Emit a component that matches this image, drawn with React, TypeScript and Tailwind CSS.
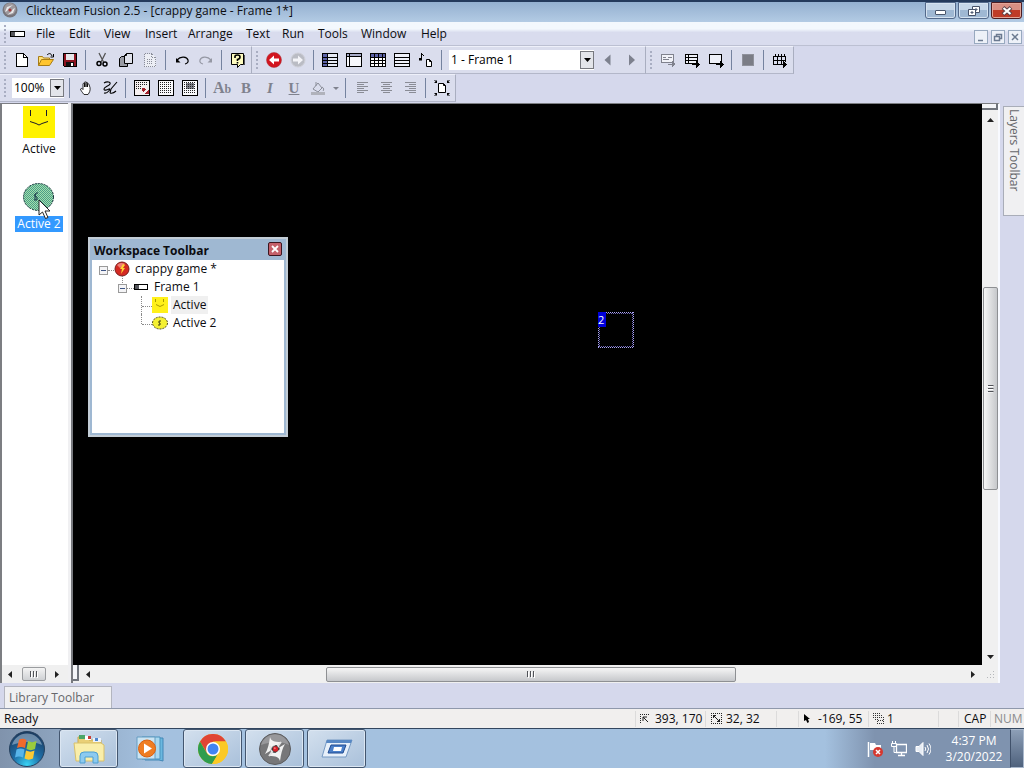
import type { ReactNode } from "react";

const MENUS = [
  { label: "File", width: "w-[33px]" },
  { label: "Edit", width: "w-[35px]" },
  { label: "View", width: "w-[41px]" },
  { label: "Insert", width: "w-[43px]" },
  { label: "Arrange", width: "w-[58px]" },
  { label: "Text", width: "w-[36px]" },
  { label: "Run", width: "w-[36px]" },
  { label: "Tools", width: "w-[43px]" },
  { label: "Window", width: "w-[60px]" },
  { label: "Help", width: "w-[39px]" },
];

/** 16x16 pixel-style icon canvas. */
function Glyph({ children, smooth }: { children: ReactNode; smooth?: boolean }) {
  return (
    <svg
      className="h-4 w-4 shrink-0"
      viewBox="0 0 16 16"
      fill="none"
      stroke="#000"
      shapeRendering={smooth ? "auto" : "crispEdges"}
      aria-hidden="true"
    >
      {children}
    </svg>
  );
}

function ToolButton({ label, children }: { label: string; children: ReactNode }) {
  return (
    <button type="button" aria-label={label} className="flex h-6 w-6 shrink-0 items-center justify-center">
      {children}
    </button>
  );
}

function Sep() {
  return <div className="ml-[3px] mr-1 h-5 w-px shrink-0 bg-[#75839f]" />;
}

function Grip() {
  return (
    <div className="flex w-[10px] shrink-0 flex-col items-center gap-[2px]">
      {[0, 1, 2, 3, 4].map((i) => (
        <div key={i} className="h-[2px] w-[2px] bg-[#a9aec2]" />
      ))}
    </div>
  );
}

function ToolGroup({ children }: { children: ReactNode }) {
  return (
    <div className="flex h-[28px] items-center border-r border-b border-r-[#a9aec0] border-b-[#b3b7c9] border-t border-t-[#eef0fa] bg-[#dadded] pr-px">
      {children}
    </div>
  );
}

function DropArrow() {
  return (
    <span className="pointer-events-none absolute top-px right-0 bottom-px flex w-[14px] items-center justify-center border border-[#77797f] bg-[#e3e5ea]">
      <svg className="h-1 w-[7px]" viewBox="0 0 7 4" aria-hidden="true">
        <path d="M0 0h7L3.500 4z" fill="#000" />
      </svg>
    </span>
  );
}

function AlignIcon({ lines }: { lines: string }) {
  return (
    <Glyph>
      <path d={lines} stroke="#8a8c95" />
    </Glyph>
  );
}

function TitleBar() {
  return (
    <header className="flex h-[22px] shrink-0 items-start border-t-2 border-[#243a5c] bg-linear-to-b from-[#94b0d0] to-[#b3cbe4] pl-[2px]">
      <svg className="h-4 w-4" viewBox="0 0 16 16" aria-hidden="true">
        <circle cx="8" cy="8" r="7.500" fill="#77757b" />
        <circle cx="8" cy="7" r="6" fill="#9d999d" />
        <path d="M11 3L5 5l-2 5 2-1 2-3zM5 13l6-2 2-5-2 1-2 3z" fill="#e8e8ea" />
        <circle cx="8" cy="8" r="1.500" fill="#a83a3a" />
      </svg>
      <h1 className="ml-2 flex-1 text-[12px] leading-[18px] whitespace-nowrap">
        Clickteam Fusion 2.5 - [crappy game - Frame 1*]
      </h1>
      <div className="flex gap-[2px] pr-[2px]">
        <button
          type="button"
          aria-label="Minimize"
          className="flex h-[17px] w-[31px] items-center justify-center rounded-b-[3px] border border-[#53698a] bg-linear-to-b from-[#c5d6e8] from-50% to-[#9fb8d3] to-50% shadow-[inset_0_0_0_1px_#d5e2f0]"
        >
          <span className="mt-[3px] h-[5px] w-[11px] rounded-[1px] border border-[#4a566b] bg-white" />
        </button>
        <button
          type="button"
          aria-label="Restore"
          className="flex h-[17px] w-[31px] items-center justify-center rounded-b-[3px] border border-[#53698a] bg-linear-to-b from-[#c5d6e8] from-50% to-[#9fb8d3] to-50% shadow-[inset_0_0_0_1px_#d5e2f0]"
        >
          <svg className="h-3 w-3" viewBox="0 0 12 12" fill="#fff" stroke="#47536a" aria-hidden="true">
            <path d="M4.500 1.500h7v6h-7zM7 4h2v1H7z" />
            <path d="M.5 4.500h7v6h-7z" />
            <path d="M3 7h2v1H3z" fill="#a9bfd8" />
          </svg>
        </button>
        <button
          type="button"
          aria-label="Close"
          className="flex h-[17px] w-[31px] items-center justify-center rounded-b-[3px] border border-[#4d1d22] bg-linear-to-b from-[#d98f83] from-50% to-[#bf3b28] to-50% shadow-[inset_0_0_0_1px_#e2a598]"
        >
          <svg className="h-[10px] w-3" viewBox="0 0 12 10" aria-hidden="true">
            <path d="M2 1.500l8 7M10 1.500l-8 7" stroke="#5c4147" strokeWidth="4" />
            <path d="M2.500 2l7 6M9.500 2l-7 6" stroke="#fff" strokeWidth="2.200" />
          </svg>
        </button>
      </div>
    </header>
  );
}

function MenuBar() {
  return (
    <nav className="flex h-[24px] shrink-0 items-center border-b border-[#bcc0d2] bg-linear-to-b from-[#f3f8fd] from-30% to-[#d9dcee] to-45%">
      <Grip />
      <svg className="mr-[9px] h-[6px] w-[15px]" viewBox="0 0 15 6" shapeRendering="crispEdges" aria-hidden="true">
        <path d="M.5.5h14v5H.5z" fill="#fff" stroke="#000" />
        <path d="M1 1h4v4H1z" fill="#55565c" />
      </svg>
      {MENUS.map((m) => (
        <button key={m.label} type="button" className={`${m.width} shrink-0 pl-[2px] text-left text-[12px] leading-4`}>
          {m.label}
        </button>
      ))}
      <div className="mt-[7px] ml-auto flex gap-[3px] pr-[2px]">
        {[
          ["Minimize document", "M3 9.500h5", "M0 0"],
          ["Restore document", "M4.500 5V3.500h5v4H8", "M2.500 5.500h5v4h-5z"],
          ["Close document", "M3 3l6 6M9 3l-6 6", "M0 0"],
        ].map(([label, a, b]) => (
          <button key={label} type="button" aria-label={label} className="h-[14px] w-[14px] border border-[#98a9bf] bg-[#edf1f8]">
            <svg className="h-3 w-3" viewBox="0 0 12 12" fill="none" stroke="#6b7a90" strokeWidth="1.500" aria-hidden="true">
              <path d={a} />
              <path d={b} />
            </svg>
          </button>
        ))}
      </div>
    </nav>
  );
}

function MainToolbar() {
  return (
    <div className="flex h-[28px] shrink-0">
      <ToolGroup>
        <Grip />
        <ToolButton label="New">
          <Glyph>
            <path d="M2.500 1.500h7l4 4v9h-11z" fill="#fff" />
            <path d="M9.500 1.500v4h4" />
          </Glyph>
        </ToolButton>
        <ToolButton label="Open">
          <Glyph smooth>
            <path d="M.5 13.500v-9h4l1 1.500h6v2" fill="#ffe27a" stroke="#a87c14" />
            <path d="M.5 13.500l3-6h12l-4 6z" fill="#ffc52e" stroke="#a87c14" />
            <path d="M9 3c2-2 4-2 5 1M15.500 2v3h-3" />
          </Glyph>
        </ToolButton>
        <ToolButton label="Save">
          <Glyph>
            <path d="M1.500 1.500h13v13h-12l-1-1z" fill="#8e1420" />
            <path d="M4 2h8v6H4z" fill="#e6e6e9" stroke="none" />
            <path d="M4 10h8v4H4z" fill="#111" stroke="none" />
            <path d="M9 11h2v3H9z" fill="#fff" stroke="none" />
          </Glyph>
        </ToolButton>
        <Sep />
        <ToolButton label="Cut">
          <Glyph smooth>
            <path d="M5 1l4.500 9M11.500 1L7 10" stroke="#555" strokeWidth="1.300" />
            <circle cx="5" cy="11.500" r="2" strokeWidth="1.500" />
            <circle cx="11" cy="12" r="2" strokeWidth="1.500" />
          </Glyph>
        </ToolButton>
        <ToolButton label="Copy">
          <Glyph smooth>
            <path d="M3.500 4.500h6v10h-8v-8z" fill="#999ba3" />
            <path d="M8.500 1.500h6v10h-8v-8z" fill="#dfe1ea" />
            <path d="M8.500 1.500v2h-2" />
          </Glyph>
        </ToolButton>
        <ToolButton label="Paste">
          <Glyph>
            <path d="M2.500 1.500h7l4 4v9h-11z" fill="#eceef5" stroke="#8a8d99" strokeDasharray="1 1" />
            <path d="M9.500 1.500v4h4M5 7.500h6M5 9.500h6M5 11.500h6" stroke="#8a8d99" strokeDasharray="1 1" />
          </Glyph>
        </ToolButton>
        <Sep />
        <ToolButton label="Undo">
          <Glyph smooth>
            <path d="M3 8c4-4.500 10-3 11 0 .5 2-1 3.500-3 4" strokeWidth="1.200" />
            <path d="M2 6v4.500h4.500z" fill="#000" stroke="none" />
          </Glyph>
        </ToolButton>
        <ToolButton label="Redo">
          <Glyph smooth>
            <path d="M13 8C9 3.500 3 5 2 8c-.5 2 1 3.500 3 4" stroke="#9598a4" strokeWidth="1.200" />
            <path d="M14 6v4.500H9.500z" fill="#9598a4" stroke="none" />
          </Glyph>
        </ToolButton>
        <Sep />
        <ToolButton label="Help">
          <Glyph smooth>
            <path d="M1.500 1.500h12v11h-3l-3 3v-3h-6z" fill="#fdfbbf" />
            <path d="M5 6V4.500q0-1.500 2.500-1.500T10 5t-2.500 2.500V9M7.500 10v1.500" strokeWidth="1.600" />
            <path d="M14.500 3v10" stroke="#55565c" />
          </Glyph>
        </ToolButton>
      </ToolGroup>
      <ToolGroup>
        <Grip />
        <ToolButton label="Back">
          <Glyph smooth>
            <circle cx="8" cy="8" r="7.500" fill="#d2151f" stroke="#a8323a" strokeWidth=".5" />
            <path d="M3 8l5-4.500v3h5v3H8v3z" fill="#fff" stroke="none" />
          </Glyph>
        </ToolButton>
        <ToolButton label="Forward">
          <Glyph smooth>
            <circle cx="8" cy="8" r="7" fill="#babcc4" stroke="#cfd0d8" />
            <path d="M13 8L8 3.500v3H3v3h5v3z" fill="#f4f4f8" stroke="none" />
          </Glyph>
        </ToolButton>
        <Sep />
        <ToolButton label="Storyboard editor">
          <Glyph>
            <path d="M.5 1.500h15v13H.5z" fill="#e6eaf4" />
            <path d="M1 2h4v12H1z" fill="#5d63a8" stroke="none" />
            <path d="M5.500 2v12M1 5.500h14M1 8.500h14M1 11.500h14" />
          </Glyph>
        </ToolButton>
        <ToolButton label="Frame editor">
          <Glyph>
            <path d="M.5 1.500h15v13H.5z" fill="#f7f8fc" />
            <path d="M1 2h14v2H1z" fill="#a9adc9" stroke="none" />
            <path d="M3.500 2v12M1 4.500h14" />
          </Glyph>
        </ToolButton>
        <ToolButton label="Event editor">
          <Glyph>
            <path d="M.5 1.500h15v13H.5z" fill="#fff" />
            <path d="M1 2h14v3H1z" fill="#5d63a8" stroke="none" />
            <path d="M1 5.500h14M1 8.500h14M1 11.500h14M4.500 2v12M8.500 2v12M12.500 2v12" />
          </Glyph>
        </ToolButton>
        <ToolButton label="Event list editor">
          <Glyph>
            <path d="M.5 1.500h15v13H.5z" fill="#eef0f8" />
            <path d="M1 5.500h14M1 8.500h14M1 11.500h14" />
          </Glyph>
        </ToolButton>
        <ToolButton label="Data elements">
          <Glyph smooth>
            <path d="M3.500 1v6M4 2l2 2" />
            <path d="M1 6h3v2.500H1z" fill="#000" stroke="none" />
            <path d="M8.500 7.500h3l2 2v5h-5zM11.500 7.500v2h2" fill="#fff" />
          </Glyph>
        </ToolButton>
        <Sep />
        <label className="relative mr-[2px] ml-[3px] block h-5 w-[145px]">
          <select
            aria-label="Frame"
            className="block h-5 w-full appearance-none bg-white pl-[2px] text-[12px] leading-5 text-black outline-none"
          >
            <option>1 - Frame 1</option>
          </select>
          <DropArrow />
        </label>
        <ToolButton label="Previous frame">
          <Glyph smooth>
            <path d="M10.500 2.500v11L4.500 8z" fill="#7d818e" stroke="none" />
          </Glyph>
        </ToolButton>
        <ToolButton label="Next frame">
          <Glyph smooth>
            <path d="M5 2.500v11L11 8z" fill="#7d818e" stroke="none" />
          </Glyph>
        </ToolButton>
      </ToolGroup>
      <ToolGroup>
        <Grip />
        <ToolButton label="Run project">
          <Glyph>
            <path d="M1.500 2.500h12v8h-12z" fill="#f1f2f8" stroke="#80828d" />
            <path d="M3 5.500h3M3 7.500h6M8 5.500h4M8 12.500h6" stroke="#80828d" />
            <path d="M12 9v6l4-3z" fill="#80828d" stroke="none" />
          </Glyph>
        </ToolButton>
        <ToolButton label="Run application">
          <Glyph>
            <path d="M1.500 2.500h12v9h-12zM1 5.500h13M1 8.500h13M4.500 2v10" fill="#eef0f8" />
            <path d="M8 12.500h6" />
            <path d="M12 9v7l4-3.500z" fill="#000" stroke="none" />
          </Glyph>
        </ToolButton>
        <ToolButton label="Run frame">
          <Glyph>
            <path d="M1.500 2.500h12v9h-12z" fill="#eef0f8" />
            <path d="M8 12.500h6" />
            <path d="M12 9v7l4-3.500z" fill="#000" stroke="none" />
          </Glyph>
        </ToolButton>
        <Sep />
        <ToolButton label="Stop">
          <Glyph>
            <path d="M2 2h11v11H2z" fill="#7b7d86" stroke="#8f919b" />
          </Glyph>
        </ToolButton>
        <Sep />
        <ToolButton label="Build and run">
          <Glyph>
            <path d="M1 4.500h13M1 8.500h13M1 12.500h11M1.500 4v9M3.500 2v2M6.500 2v2M9.500 2v2M12.500 2v2M5.500 4v9M9.500 4v9M13.500 4v6" />
            <path d="M11 9v7l4-3.500z" fill="#000" stroke="none" />
          </Glyph>
        </ToolButton>
      </ToolGroup>
    </div>
  );
}

function FrameToolbar() {
  return (
    <div className="flex h-[28px] shrink-0">
      <ToolGroup>
        <Grip />
        <label className="relative mr-[2px] ml-[2px] block h-5 w-[52px]">
          <select
            aria-label="Zoom"
            className="block h-5 w-full appearance-none bg-white pl-[2px] text-[12px] leading-5 text-black outline-none"
          >
            <option>100%</option>
          </select>
          <DropArrow />
        </label>
        <Sep />
        <ToolButton label="Pan">
          <Glyph smooth>
            <path
              d="M6 14.500C4 12 2.500 10 2.500 9c.5-1 2-.5 2.500.5V4c0-1 1.500-1 1.500 0v3-4.500c0-1 1.500-1 1.500 0V7 3c0-1 1.500-1 1.500 0v4-2.500c0-1 1.500-1 1.500 0l1 3c.5 3-.5 5-2 7z"
              fill="#fff"
              strokeWidth=".8"
            />
          </Glyph>
        </ToolButton>
        <ToolButton label="Select with pen">
          <Glyph smooth>
            <path d="M2 3c3-2 7-1 6 1S2 7 2 9s3 1 5 0-1 5-5 4M8 13l1-4 6-7M8 13c3 1 5-1 6-2" strokeWidth="1.100" />
          </Glyph>
        </ToolButton>
        <Sep />
        <ToolButton label="Grid setup">
          <Glyph>
            <defs>
              <pattern id="dots" width="2" height="2" patternUnits="userSpaceOnUse">
                <path d="M0 0h1v1H0z" fill="#222" stroke="none" />
              </pattern>
            </defs>
            <path d="M.5.5h15v15H.5z" fill="#f6f0f0" />
            <path d="M2 2h11v4H2zM2 6h5v3H2z" fill="url(#dots)" stroke="none" />
            <path d="M8 8h3v1h1v1h-1v1h-1v1H9v-1H8zM14 10h1v4h-4v-1h1v-1h1v-1h1z" fill="#a3212a" stroke="none" />
          </Glyph>
        </ToolButton>
        <ToolButton label="Show grid">
          <Glyph>
            <path d="M.5.5h15v15H.5z" fill="#fafafc" />
            <path d="M2 2h12v12H2z" fill="url(#dots)" stroke="none" />
          </Glyph>
        </ToolButton>
        <ToolButton label="Snap to grid">
          <Glyph>
            <path d="M.5.5h15v15H.5z" fill="#fafafc" />
            <path d="M4 3h8v6H4z" fill="#7c7e86" stroke="none" />
            <path d="M2 2h12v12H2z" fill="url(#dots)" stroke="none" />
          </Glyph>
        </ToolButton>
        <Sep />
        <ToolButton label="Font">
          <span className="font-['Liberation_Serif',serif] text-[16px] leading-4 font-bold text-[#7f828e]">
            A<span className="text-[12px]">b</span>
          </span>
        </ToolButton>
        <ToolButton label="Bold">
          <span className="font-['Liberation_Serif',serif] text-[15px] leading-4 font-bold text-[#7f828e]">B</span>
        </ToolButton>
        <ToolButton label="Italic">
          <span className="font-['Liberation_Serif',serif] text-[15px] leading-4 font-bold text-[#7f828e] italic">I</span>
        </ToolButton>
        <ToolButton label="Underline">
          <span className="font-['Liberation_Serif',serif] text-[15px] leading-4 font-bold text-[#7f828e] underline">U</span>
        </ToolButton>
        <ToolButton label="Text color">
          <Glyph smooth>
            <path d="M3 9l5-6 4 5-4 4zM12 7c2 1 2 3 1 4M6 6V2" stroke="#8b8e99" />
            <path d="M1 12h14v3H1z" fill="#b0b2bb" stroke="none" />
          </Glyph>
        </ToolButton>
        <button type="button" aria-label="Text color options" className="flex h-6 w-3 items-center justify-center">
          <svg className="h-[3px] w-[6px]" viewBox="0 0 6 3" aria-hidden="true">
            <path d="M0 0h6L3 3z" fill="#7f828e" />
          </svg>
        </button>
        <Sep />
        <ToolButton label="Align left">
          <AlignIcon lines="M3 2.500h11M3 4.500h7M3 6.500h11M3 8.500h7M3 10.500h11M3 12.500h7" />
        </ToolButton>
        <ToolButton label="Align center">
          <AlignIcon lines="M3 2.500h11M5 4.500h7M3 6.500h11M5 8.500h7M3 10.500h11M5 12.500h7" />
        </ToolButton>
        <ToolButton label="Align right">
          <AlignIcon lines="M3 2.500h11M7 4.500h7M3 6.500h11M7 8.500h7M3 10.500h11M7 12.500h7" />
        </ToolButton>
        <Sep />
        <ToolButton label="Center frame">
          <Glyph smooth>
            <path d="M4.500 3.500h5l2 2v7h-7zM9.500 3.500v2h2" fill="#fff" />
            <path
              d="M3 0v3H0zM13 0v3h3zM3 16v-3H0zM13 16v-3h3zM0 0h1l2 2v1zM16 0h-1l-2 2v1zM0 16h1l2-2v-1zM16 16h-1l-2-2v-1z"
              fill="#000"
              stroke="none"
            />
          </Glyph>
        </ToolButton>
      </ToolGroup>
    </div>
  );
}

function ObjectList() {
  return (
    <aside className="flex w-[68px] shrink-0 flex-col border-t border-l-2 border-[#7c7e82] bg-white">
      <div className="flex flex-1 flex-col items-center pl-2 text-[12px] leading-4">
        <svg className="mt-[2px] h-8 w-8" viewBox="0 0 32 32" aria-hidden="true">
          <path d="M0 0h32v32H0z" fill="#fff200" />
          <path d="M7.500 4v6M23.500 4v6M7 15.500l3 1 3 1 3 1.500 3-1.500 3-1 3-1" fill="none" stroke="#1b1a2c" />
        </svg>
        <span className="mt-[3px]">Active</span>
        <div className="relative mt-[26px] h-8 w-8">
          <svg className="h-8 w-8" viewBox="0 0 32 32" aria-hidden="true">
            <defs>
              <pattern id="dither" width="2" height="2" patternUnits="userSpaceOnUse">
                <path d="M0 0h2v2H0z" fill="#a2e0ac" />
                <path d="M0 0h1v1H0zM1 1h1v1H1z" fill="#4d9c88" />
              </pattern>
            </defs>
            <ellipse cx="15.500" cy="14" rx="15" ry="13.500" fill="url(#dither)" stroke="#16333a" strokeDasharray="2 1" />
            <path d="M15 10h-2l-1 2v1l2 1v3h-3M12 11v6" fill="none" stroke="#1c3b4a" />
          </svg>
          <svg className="absolute top-4 left-[15px] h-[21px] w-[14px]" viewBox="0 0 14 21" aria-hidden="true">
            <path d="M1 1v15l3.500-3 3 6.500 2.500-1-3-6.500h5z" fill="#fff" stroke="#222" />
          </svg>
        </div>
        <span className="mt-px bg-[#3399ff] px-[2px] text-white">Active 2</span>
      </div>
      <div className="flex h-[18px] items-center justify-between bg-[#f0f0f0] pr-[9px] pl-[6px]">
        <svg className="h-[7px] w-1" viewBox="0 0 4 7" aria-hidden="true">
          <path d="M4 0v7L0 3.500z" fill="#222" />
        </svg>
        <button
          type="button"
          aria-label="Scroll objects"
          className="flex h-[14px] w-6 items-center justify-center gap-px rounded-[2px] border border-[#9a9c9f] bg-linear-to-b from-[#f4f4f4] to-[#cfd1d4]"
        >
          <ScrollRidges />
        </button>
        <svg className="h-[7px] w-1" viewBox="0 0 4 7" aria-hidden="true">
          <path d="M0 0v7L4 3.500z" fill="#222" />
        </svg>
      </div>
    </aside>
  );
}

function ScrollRidges() {
  return (
    <svg className="h-[7px] w-2" viewBox="0 0 8 7" shapeRendering="crispEdges" aria-hidden="true">
      <path d="M.5 0v6M3.500 0v6M6.500 0v6" stroke="#505257" />
      <path d="M1.500 1v6M4.500 1v6M7.500 1v6" stroke="#fff" />
    </svg>
  );
}

function Expander() {
  return (
    <svg className="mt-[2px] h-[9px] w-[9px] shrink-0" viewBox="0 0 9 9" shapeRendering="crispEdges" aria-hidden="true">
      <path d="M.5.5h8v8h-8z" fill="#f4f4f6" stroke="#9a9a9a" />
      <path d="M2 4.500h5" stroke="#3d5484" />
    </svg>
  );
}

function WorkspaceWindow() {
  return (
    <section className="absolute top-[133px] left-[15px] flex h-[200px] w-[200px] flex-col border-2 border-[#c3cdd6] bg-[#9fb8d2] p-[2px] pt-0 text-[12px]">
      <div className="flex h-[21px] items-center justify-between pr-[2px] pl-[2px]">
        <h2 className="mt-[3px] font-bold">Workspace Toolbar</h2>
        <button
          type="button"
          aria-label="Close workspace toolbar"
          className="mb-[2px] flex h-[14px] w-[14px] items-center justify-center rounded-[2px] border border-[#3c1620] bg-[#c4606a]"
        >
          <svg className="h-2 w-2" viewBox="0 0 8 8" aria-hidden="true">
            <path d="M1 1l6 6M7 1L1 7" stroke="#fff" strokeWidth="1.800" />
          </svg>
        </button>
      </div>
      <ul className="flex-1 bg-white leading-[18px]">
        <li className="flex h-[18px] items-center pl-[7px]">
          <Expander />
          <span className="mt-[2px] h-px w-[6px] border-t border-dotted border-[#8a8a8a]" />
          <svg className="mr-[5px] h-4 w-4" viewBox="0 0 16 16" aria-hidden="true">
            <circle cx="8" cy="8" r="7" fill="#d42a22" stroke="#7a1d1d" />
            <path d="M3 4a6 6 0 0 1 8-1L6 7z" fill="#f08077" />
            <path d="M9 3L6 8h2l-1 5 4-6H9l2-3z" fill="#ffd335" />
          </svg>
          crappy game *
        </li>
        <li className="relative flex h-[18px] items-center pl-[26px]">
          <span className="absolute -top-[2px] left-[30px] h-[7px] border-l border-dotted border-[#8a8a8a]" />
          <Expander />
          <span className="mt-[2px] h-px w-[7px] border-t border-dotted border-[#8a8a8a]" />
          <svg className="mr-[6px] h-[6px] w-[14px]" viewBox="0 0 14 6" shapeRendering="crispEdges" aria-hidden="true">
            <path d="M.5.500h13v5H.5z" fill="#fff" stroke="#000" />
            <path d="M1 1h4v4H1z" fill="#55565c" />
          </svg>
          Frame 1
        </li>
        <li className="flex h-[18px] items-center pl-[49px]">
          <span className="h-[18px] border-l border-dotted border-[#8a8a8a]" />
          <span className="mt-[2px] h-px w-[10px] border-t border-dotted border-[#8a8a8a]" />
          <svg className="mr-[3px] h-4 w-4" viewBox="0 0 16 16" aria-hidden="true">
            <path d="M0 0h16v16H0z" fill="#fff01a" />
            <path d="M3.500 2v3M11.500 2v3M4 7.500l4 2 4-2" fill="none" stroke="#a99b00" />
          </svg>
          <span className="bg-[#f0f0f0] px-[2px]">Active</span>
        </li>
        <li className="flex h-[18px] items-center pl-[49px]">
          <span className="mb-2 h-[10px] border-l border-dotted border-[#8a8a8a]" />
          <span className="mt-[2px] h-px w-[10px] border-t border-dotted border-[#8a8a8a]" />
          <svg className="mr-[5px] h-4 w-4" viewBox="0 0 16 16" aria-hidden="true">
            <ellipse cx="8" cy="8" rx="7.500" ry="6" fill="#f4f032" stroke="#4c4a14" strokeDasharray="2 1" />
            <path d="M9 6H7v2h1v2H6" fill="none" stroke="#3b3a10" />
          </svg>
          Active 2
        </li>
      </ul>
    </section>
  );
}

function FrameCanvas() {
  return (
    <main className="relative flex-1 overflow-hidden bg-black">
      {/* dragged object outline, placed at its position on the frame */}
      <div className="absolute top-[208px] left-[525px] h-9 w-9">
        <svg className="absolute inset-0 h-9 w-9" viewBox="0 0 36 36" shapeRendering="crispEdges" aria-hidden="true">
          <path d="M0 .5h36M0 35.500h36M.5 0v36M35.500 0v36" stroke="#a9a4f2" strokeDasharray="1 1" />
          <path d="M1 1.500h34M1 34.500h34M1.500 1v34M34.500 1v34" stroke="#6f68b8" strokeDasharray="1 1" />
        </svg>
        <span className="relative block h-[15px] w-2 bg-[#0000dc] text-[11px] leading-[15px] text-white">2</span>
      </div>
      <WorkspaceWindow />
    </main>
  );
}

function FrameEditor() {
  return (
    <div className="flex flex-1 flex-col border-t border-r-2 border-l-2 border-t-[#7c7e82] border-r-[#f8faff] border-l-[#77797e] bg-[#f0f0f0]">
      <div className="flex flex-1">
        <FrameCanvas />
        <div className="flex w-4 flex-col items-center">
          <div className="h-[6px] w-full border-r-2 border-b-2 border-[#70747c] bg-[#f4f5f8]" />
          <svg className="mt-[8px] h-1 w-[7px]" viewBox="0 0 7 4" aria-hidden="true">
            <path d="M0 4h7L3.500 0z" fill="#222" />
          </svg>
          <div className="flex-[166]" />
          <button
            type="button"
            aria-label="Scroll vertically"
            className="flex w-[15px] flex-[201] items-center justify-center rounded-[2px] border border-[#8e9093] bg-linear-to-r from-[#f6f6f6] to-[#c6c8cb]"
          >
            <span className="rotate-90">
              <ScrollRidges />
            </span>
          </button>
          <div className="flex-[166]" />
          <svg className="mb-[6px] h-1 w-[7px]" viewBox="0 0 7 4" aria-hidden="true">
            <path d="M0 0h7L3.500 4z" fill="#222" />
          </svg>
        </div>
      </div>
      <div className="flex h-[18px] items-center">
        <div className="h-4 w-[6px] self-start border-r-2 border-b-2 border-[#70747c] bg-[#f4f5f8]" />
        <svg className="ml-[7px] h-[7px] w-1" viewBox="0 0 4 7" aria-hidden="true">
          <path d="M4 0v7L0 3.500z" fill="#222" />
        </svg>
        <div className="flex-[237]" />
        <button
          type="button"
          aria-label="Scroll horizontally"
          className="flex h-[15px] flex-[409] items-center justify-center rounded-[2px] border border-[#8e9093] bg-linear-to-b from-[#f6f6f6] to-[#c6c8cb]"
        >
          <ScrollRidges />
        </button>
        <div className="flex-[236]" />
        <svg className="mr-[9px] h-[7px] w-1" viewBox="0 0 4 7" aria-hidden="true">
          <path d="M0 0v7L4 3.500z" fill="#222" />
        </svg>
        <svg className="mr-[2px] h-3 w-3" viewBox="0 0 12 12" fill="#b5b7bb" aria-hidden="true">
          <path d="M9 3h1v1H9zM9 6h1v1H9zM6 6h1v1H6zM9 9h1v1H9zM6 9h1v1H6zM3 9h1v1H3z" />
        </svg>
      </div>
    </div>
  );
}

function StatusBar() {
  return (
    <footer className="flex h-5 shrink-0 items-center border-t border-[#8f98ab] bg-[#f1efee] pl-1 text-[12px] leading-4">
      <span className="flex-1">Ready</span>
      <span className="flex h-4 w-[70px] items-center border-l border-[#dcdbdb] pl-1">
        <svg className="mr-[6px] h-[9px] w-[9px]" viewBox="0 0 9 9" fill="none" stroke="#222" aria-hidden="true">
          <path d="M0 .5h9M.5 0v9" strokeDasharray="1 1" />
          <path d="M3 7V3h4M3 3l5 5" />
        </svg>
        393, 170
      </span>
      <span className="flex h-4 w-[71px] items-center border-l border-[#dcdbdb] pl-[5px]">
        <svg className="mr-1 h-[11px] w-[11px]" viewBox="0 0 11 11" fill="none" stroke="#222" shapeRendering="crispEdges" aria-hidden="true">
          <path d="M0 .5h11M0 10.500h11M.5 0v11M10.500 0v11" strokeDasharray="1 1" />
          <path d="M2 2h3v1H4v1h1v1h1v1h1v1h1V6h1v3H6V8h1V7H6V6H5V5H4V4H3v1H2z" fill="#222" stroke="none" />
        </svg>
        32, 32
      </span>
      <span className="h-4 w-[22px] border-l border-[#dcdbdb]" />
      <span className="flex h-4 w-[70px] items-center border-l border-[#dcdbdb] pl-[5px]">
        <svg className="mr-2 h-[9px] w-[6px]" viewBox="0 0 6 9" aria-hidden="true">
          <path d="M0 0l6 5H4l1 3-1.500 1L2 6 0 7z" />
        </svg>
        -169, 55
      </span>
      <span className="flex h-4 w-[70px] items-center border-l border-[#dcdbdb] pl-1">
        <svg className="mr-[3px] h-[11px] w-[11px]" viewBox="0 0 11 11" stroke="#333" shapeRendering="crispEdges" aria-hidden="true">
          <path d="M0 .5h7M0 4.500h3M.5 0v5M2 2.500h7M2.500 2v5M4 4.500h7M4 10.500h7M4.500 4v7M10.500 4v7M5 7.500h5" strokeDasharray="1 1" />
        </svg>
        1
      </span>
      <span className="h-4 w-5 border-l border-[#dcdbdb]" />
      <span className="h-4 w-8 border-l border-[#dcdbdb] pl-[5px]">CAP</span>
      <span className="h-4 w-[34px] border-l border-[#dcdbdb] pl-[3px] text-[#8b8b8d]">NUM</span>
    </footer>
  );
}

function TaskButton({ label, idle, children }: { label: string; idle?: boolean; children: ReactNode }) {
  return (
    <button
      type="button"
      aria-label={label}
      className={`flex h-[39px] w-[59px] items-center justify-center rounded-[3px] ${
        idle ? "" : "border border-[#43566f] bg-linear-to-br from-[#d3e0ee] to-[#a9c0da] shadow-[inset_0_0_0_1px_#dbe6f2]"
      }`}
    >
      {children}
    </button>
  );
}

function Taskbar() {
  return (
    <div className="flex h-10 shrink-0 items-center border-t border-[#33465f] bg-linear-to-r from-[#8093ac] via-[#a4c1df] via-15% to-[#a4c1df]">
      <button type="button" aria-label="Start" className="ml-[9px] h-9 w-9">
        <svg viewBox="0 0 36 36" aria-hidden="true">
          <defs>
            <radialGradient id="orb" cx="50%" cy="95%" r="90%">
              <stop offset="0" stopColor="#38d3f5" />
              <stop offset=".45" stopColor="#1f6fa8" />
              <stop offset="1" stopColor="#1b3d63" />
            </radialGradient>
          </defs>
          <circle cx="18" cy="18" r="17.500" fill="url(#orb)" stroke="#26405e" />
          <path d="M3 14a15.500 15.500 0 0 1 30 0c-8-4-20-4-30 0z" fill="#bcd0e2" opacity=".5" />
          <path d="M10 9c3-2 5-1 7.500 0L16 17c-3-1.500-5-1.500-8 0z" fill="#ef6a2c" />
          <path d="M19 10c3 1.500 5 1.500 8.500 0L26 18c-3 1.500-5.500 1.500-8.500 0z" fill="#9acb3e" />
          <path d="M7.500 18.500c3-1.500 5-1.500 8 0l-1.500 8c-3-1.500-5-1.500-8 0z" fill="#58b5ea" />
          <path d="M17 19.500c3 1.500 5.500 1.500 8.500 0L24 27.500c-3 1.500-5.500 1.500-8.500 0z" fill="#fcc934" />
        </svg>
      </button>
      <div className="ml-[14px] flex gap-[3px]">
        <TaskButton label="Windows Explorer">
          <svg className="h-8 w-9" viewBox="0 0 36 32" aria-hidden="true">
            <path d="M7 4h9l2 3h12v20H7z" fill="#e9cf76" stroke="#c9a94e" />
            <path d="M8 2h6v4H8z" fill="#4ba668" />
            <path d="M14 3h6v4h-6z" fill="#fff" />
            <path d="M17 3h3v3h-3z" fill="#c93c35" />
            <path d="M22 5h8v4h-8z" fill="#eef3fa" />
            <path d="M24 5h3v3h-3z" fill="#4d86cf" />
            <path d="M3 10h27l3 2v16H5z" fill="#f9eeaa" stroke="#d8c06a" />
            <path d="M9 30v-7q0-4 4-4h10q4 0 4 4v7h-5v-6h-8v6z" fill="#8ccaf0" stroke="#4c9fd2" />
          </svg>
        </TaskButton>
        <TaskButton label="Media Player" idle>
          <svg className="h-7 w-8" viewBox="0 0 32 28" aria-hidden="true">
            <path d="M10 3h18v23l-4-1H10z" fill="#6bb8df" stroke="#4287b6" />
            <path d="M7 2h18v22H7z" fill="#a9d8ef" stroke="#4b93be" />
            <path d="M2 2h18v22H2z" fill="#cbe4f2" stroke="#659cc1" />
            <circle cx="12" cy="13.500" r="8.500" fill="#ef7d22" stroke="#d8600f" />
            <path d="M9 8.500v10l8-5z" fill="#fff" />
          </svg>
        </TaskButton>
        <TaskButton label="Google Chrome">
          <svg className="h-[30px] w-[30px]" viewBox="0 0 30 30" aria-hidden="true">
            <circle cx="15" cy="15" r="15" fill="#fbc926" />
            <path d="M2 7.500A15 15 0 0 1 28 7.500H15L9 19z" fill="#e04435" />
            <path d="M2 7.500A15 15 0 0 0 14 30l7-11.500a7 7 0 0 1-12.500 0z" fill="#2f9d4e" />
            <path d="M28 7.500A15 15 0 0 1 14 30l7-11.500A7 7 0 0 0 15 7.500z" fill="#fbc926" />
            <circle cx="15" cy="15" r="7" fill="#fff" />
            <circle cx="15" cy="15" r="5.500" fill="#4284f3" />
          </svg>
        </TaskButton>
        <TaskButton label="Clickteam Fusion">
          <svg className="h-8 w-8" viewBox="0 0 32 32" aria-hidden="true">
            <circle cx="16" cy="16" r="15.500" fill="#777779" stroke="#5c5c5e" />
            <path d="M2 12a14.500 14.500 0 0 1 28 0c-8-4-19-3-28 0z" fill="#98989b" />
            <path d="M11 4c1 4 4 5 11 5l-3 3c-5 0-7 2-8 6l-5 3c3-5 4-10 5-17z" fill="#f2f2f2" />
            <path d="M21 28c-1-4-4-5-11-5l3-3c5 0 7-2 8-6l5-3c-3 5-4 10-5 17z" fill="#f2f2f2" />
            <path d="M22 9l-3 4 2 6M10 23l3-4-2-6" fill="none" stroke="#e4e4e4" strokeWidth="2" />
            <path d="M12 16l5-4 4 4-5 4z" fill="#343436" />
            <circle cx="16.500" cy="16" r="2.700" fill="#d82027" />
            <circle cx="15.800" cy="15.200" r="1" fill="#f4747a" />
          </svg>
        </TaskButton>
        <TaskButton label="Screen Recorder">
          <svg className="h-5 w-8" viewBox="0 0 32 20" aria-hidden="true">
            <path d="M6 1h25l-6 17H1z" fill="#e7f0fa" stroke="#7599c3" />
            <path d="M6 1h25l-1 3H5z" fill="#5687c4" />
            <path d="M10 6h15l-3 8H7z" fill="#4a7fc8" stroke="#1f4a91" />
            <path d="M13 8h8l-1 4h-8z" fill="#fff" />
          </svg>
        </TaskButton>
      </div>
      <div className="ml-auto flex h-full items-center bg-linear-to-r from-transparent to-[#7f93af] to-25% pl-[42px] text-white">
        <svg className="mr-2 h-4 w-4" viewBox="0 0 16 16" aria-hidden="true">
          <path d="M1.500 1v15" stroke="#fff" strokeWidth="1.500" />
          <path d="M3 2h5l1 2h5v7H9L8 9H3z" fill="#fff" />
          <circle cx="11" cy="11" r="5" fill="#d6382f" />
          <path d="M9 9l4 4M13 9l-4 4" stroke="#fff" strokeWidth="1.500" />
        </svg>
        <svg className="mr-2 h-4 w-4" viewBox="0 0 16 16" fill="none" stroke="#fff" aria-hidden="true">
          <path d="M5.500 3.500h10v8h-10zM7 14.500h7M10.500 12v2" strokeWidth="1.300" />
          <path d="M.5 2.500h5v3h-5zM1.500 0v2M4.500 0v2M3 6v5.500h2" />
        </svg>
        <svg className="mr-3 h-4 w-4" viewBox="0 0 16 16" fill="none" stroke="#fff" aria-hidden="true">
          <path d="M1 5.500h3l4-4v13l-4-4H1z" fill="#e6ecf4" />
          <path d="M10 6q1.500 2 0 4M12 4q3 4 0 8M14 2.500q4 5.500 0 11" />
        </svg>
        <div className="w-[62px] text-center text-[12px] leading-4">
          <div>4:37 PM</div>
          <div>3/20/2022</div>
        </div>
        <button
          type="button"
          aria-label="Show desktop"
          className="ml-[5px] h-full w-[14px] border border-[#a9b8cc] border-l-[#40516a] bg-linear-to-b from-[#8d9fb7] to-[#4f627d]"
        />
      </div>
    </div>
  );
}

export default function App() {
  return (
    <div className="flex h-screen flex-col overflow-hidden bg-[#d5d8ec] font-['Open_Sans','Noto_Sans',sans-serif] text-[#0c0c10]">
      <TitleBar />
      <MenuBar />
      <MainToolbar />
      <FrameToolbar />
      <div className="mt-[1px] flex min-h-0 flex-1">
        <ObjectList />
        <div className="w-[3px] bg-[#f0f0f2]" />
        <FrameEditor />
        <aside className="w-6 bg-[#d5d8ec] pt-[3px] pl-[3px]">
          <button
            type="button"
            className="flex h-[110px] w-full items-center border border-r-0 border-[#a9adb8] bg-[#f0f0f2] pt-[2px] text-[12px] leading-4 text-[#66676b] [writing-mode:vertical-rl]"
          >
            Layers Toolbar
          </button>
        </aside>
      </div>
      <div className="flex h-[25px] shrink-0 items-end pl-1">
        <button type="button" className="h-[22px] w-[108px] border border-b-0 border-[#b3b5bf] bg-[#f0f0f2] pl-1 text-left text-[12px] text-[#66676b]">
          Library Toolbar
        </button>
      </div>
      <StatusBar />
      <Taskbar />
    </div>
  );
}
